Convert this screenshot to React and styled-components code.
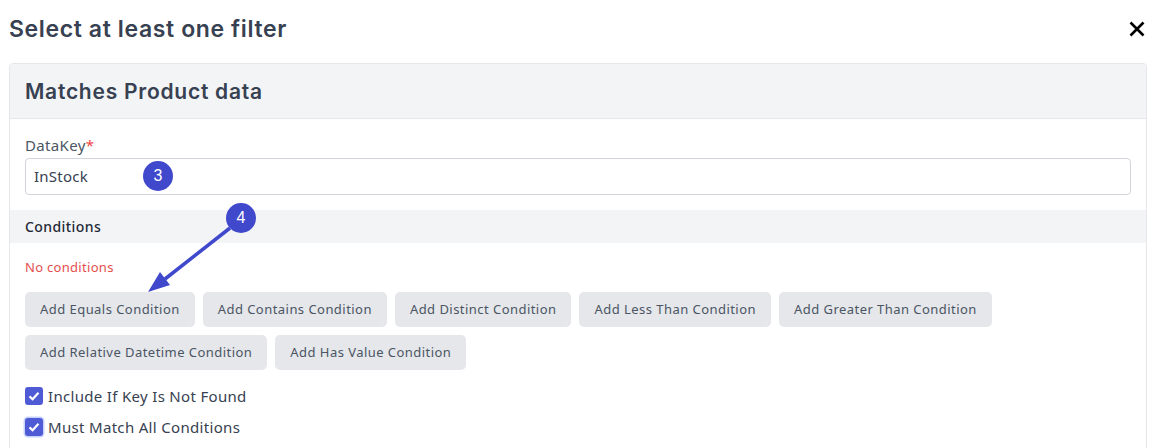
import React from 'react'
import styled, { createGlobalStyle } from 'styled-components'

const GlobalStyle = createGlobalStyle`
  html, body { margin: 0; padding: 0; background: #fff; }
  body { font-family: "Noto Sans", sans-serif; width: 1164px; height: 448px; overflow: hidden; }
`

const conditionButtons = [
  'Add Equals Condition',
  'Add Contains Condition',
  'Add Distinct Condition',
  'Add Less Than Condition',
  'Add Greater Than Condition',
  'Add Relative Datetime Condition',
  'Add Has Value Condition',
]

const App = () => (
  <Page>
    <GlobalStyle />
    <TopBar>
      <Title>Select at least one filter</Title>
      <CloseButton aria-label="Close">
        <svg width="16" height="16" viewBox="0 0 16 16">
          <path d="M1.5 1.5L14.5 14.5M14.5 1.5L1.5 14.5" stroke="#000" strokeWidth="2.6" fill="none" />
        </svg>
      </CloseButton>
    </TopBar>
    <Card>
      <CardHeader>Matches Product data</CardHeader>
      <FieldBlock>
        <Label>DataKey<Required>*</Required></Label>
        <InputBox>InStock</InputBox>
      </FieldBlock>
      <SectionBar>Conditions</SectionBar>
      <ConditionsBody>
        <ErrorText>No conditions</ErrorText>
        <ButtonWrap>
          {conditionButtons.map((text) => (
            <AddButton key={text}>{text}</AddButton>
          ))}
        </ButtonWrap>
        <CheckList>
          <CheckRow>
            <CheckBox><CheckMark /></CheckBox>
            Include If Key Is Not Found
          </CheckRow>
          <CheckRow>
            <CheckBox $focused><CheckMark /></CheckBox>
            Must Match All Conditions
          </CheckRow>
        </CheckList>
      </ConditionsBody>
    </Card>
    <Arrow width="120" height="70" viewBox="0 0 120 70">
      <path d="M85 2L20 53" stroke="#4048cc" strokeWidth="3.5" fill="none" />
      <path d="M3 66L15 46L25 59Z" fill="#4048cc" />
    </Arrow>
    <Badge $left={143} $top={161}>3</Badge>
    <Badge $left={226} $top={203}>4</Badge>
  </Page>
)

const CheckMark = () => (
  <svg width="14" height="14" viewBox="0 0 14 14">
    <path d="M2.5 7.4L5.6 10.2L11.5 3.8" stroke="#fff" strokeWidth="2.2" fill="none" />
  </svg>
)

const Page = styled.div`
  position: relative;
  width: 1164px;
  height: 448px;
  overflow: hidden;
  padding: 0 17px 0 9px;
  box-sizing: border-box;
`

const TopBar = styled.div`
  height: 63px;
  display: flex;
  align-items: flex-start;
  justify-content: space-between;
`

const Title = styled.h2`
  margin: 13px 0 0;
  font-family: Inter, sans-serif;
  font-size: 23px;
  line-height: 32px;
  font-weight: 600;
  letter-spacing: 0.62px;
  color: #374151;
`

const CloseButton = styled.div`
  margin: 21px 2px 0 0;
  width: 16px;
  height: 16px;
  display: flex;
`

const Card = styled.div`
  border: 1px solid #e5e7eb;
  border-radius: 4px;
  background: #fff;
  height: 500px;
`

const CardHeader = styled.div`
  height: 55px;
  box-sizing: border-box;
  padding-left: 15px;
  display: flex;
  align-items: center;
  background: #f3f4f6;
  border-bottom: 1px solid #e5e7eb;
  border-radius: 4px 4px 0 0;
  font-family: Inter, sans-serif;
  font-size: 21px;
  font-weight: 600;
  letter-spacing: 0.75px;
  color: #374151;
`

const FieldBlock = styled.div`
  padding: 16px 15px 15px;
`

const Label = styled.div`
  font-size: 15px;
  line-height: 21px;
  padding-bottom: 2px;
  letter-spacing: 0.35px;
  color: #4b5563;
`

const Required = styled.span`
  color: #ef4444;
`

const InputBox = styled.div`
  height: 37px;
  box-sizing: border-box;
  padding: 0 0 2px 8px;
  display: flex;
  align-items: center;
  border: 1px solid #d1d5db;
  border-radius: 4px;
  font-size: 15px;
  letter-spacing: 0.25px;
  color: #374151;
`

const SectionBar = styled.div`
  height: 33px;
  box-sizing: border-box;
  padding: 0 0 1px 15px;
  display: flex;
  align-items: center;
  background: #f3f4f6;
  font-size: 14px;
  font-weight: 500;
  letter-spacing: 0.42px;
  color: #1f2937;
`

const ConditionsBody = styled.div`
  padding: 15px 15px 0;
`

const ErrorText = styled.div`
  font-size: 13px;
  line-height: 18px;
  letter-spacing: 0.3px;
  color: #e34f4f;
`

const ButtonWrap = styled.div`
  margin-top: 16px;
  display: flex;
  flex-wrap: wrap;
  gap: 8px;
`

const AddButton = styled.div`
  height: 35px;
  box-sizing: border-box;
  padding: 0 15px 2px;
  display: flex;
  align-items: center;
  background: #e5e7eb;
  border-radius: 5px;
  font-size: 13px;
  letter-spacing: 0.455px;
  color: #4b5563;
`

const CheckList = styled.div`
  margin-top: 10px;
`

const CheckRow = styled.div`
  height: 31px;
  display: flex;
  align-items: center;
  gap: 5px;
  font-size: 15px;
  letter-spacing: 0.32px;
  color: #374151;
`

const CheckBox = styled.div`
  width: 18px;
  height: 18px;
  display: flex;
  align-items: center;
  justify-content: center;
  background: #4f5bd5;
  border-radius: 3px;
  box-shadow: ${({ $focused }) => ($focused ? '0 0 0 1.5px #c7d2fe' : 'none')};
`

const Arrow = styled.svg`
  position: absolute;
  left: 145px;
  top: 226px;
`

const Badge = styled.div`
  position: absolute;
  left: ${({ $left }) => $left}px;
  top: ${({ $top }) => $top}px;
  width: 30px;
  height: 30px;
  border-radius: 50%;
  background: #4048cc;
  color: #fff;
  display: flex;
  align-items: center;
  justify-content: center;
  font-family: "Liberation Sans", sans-serif;
  font-size: 16px;
`

export default App
